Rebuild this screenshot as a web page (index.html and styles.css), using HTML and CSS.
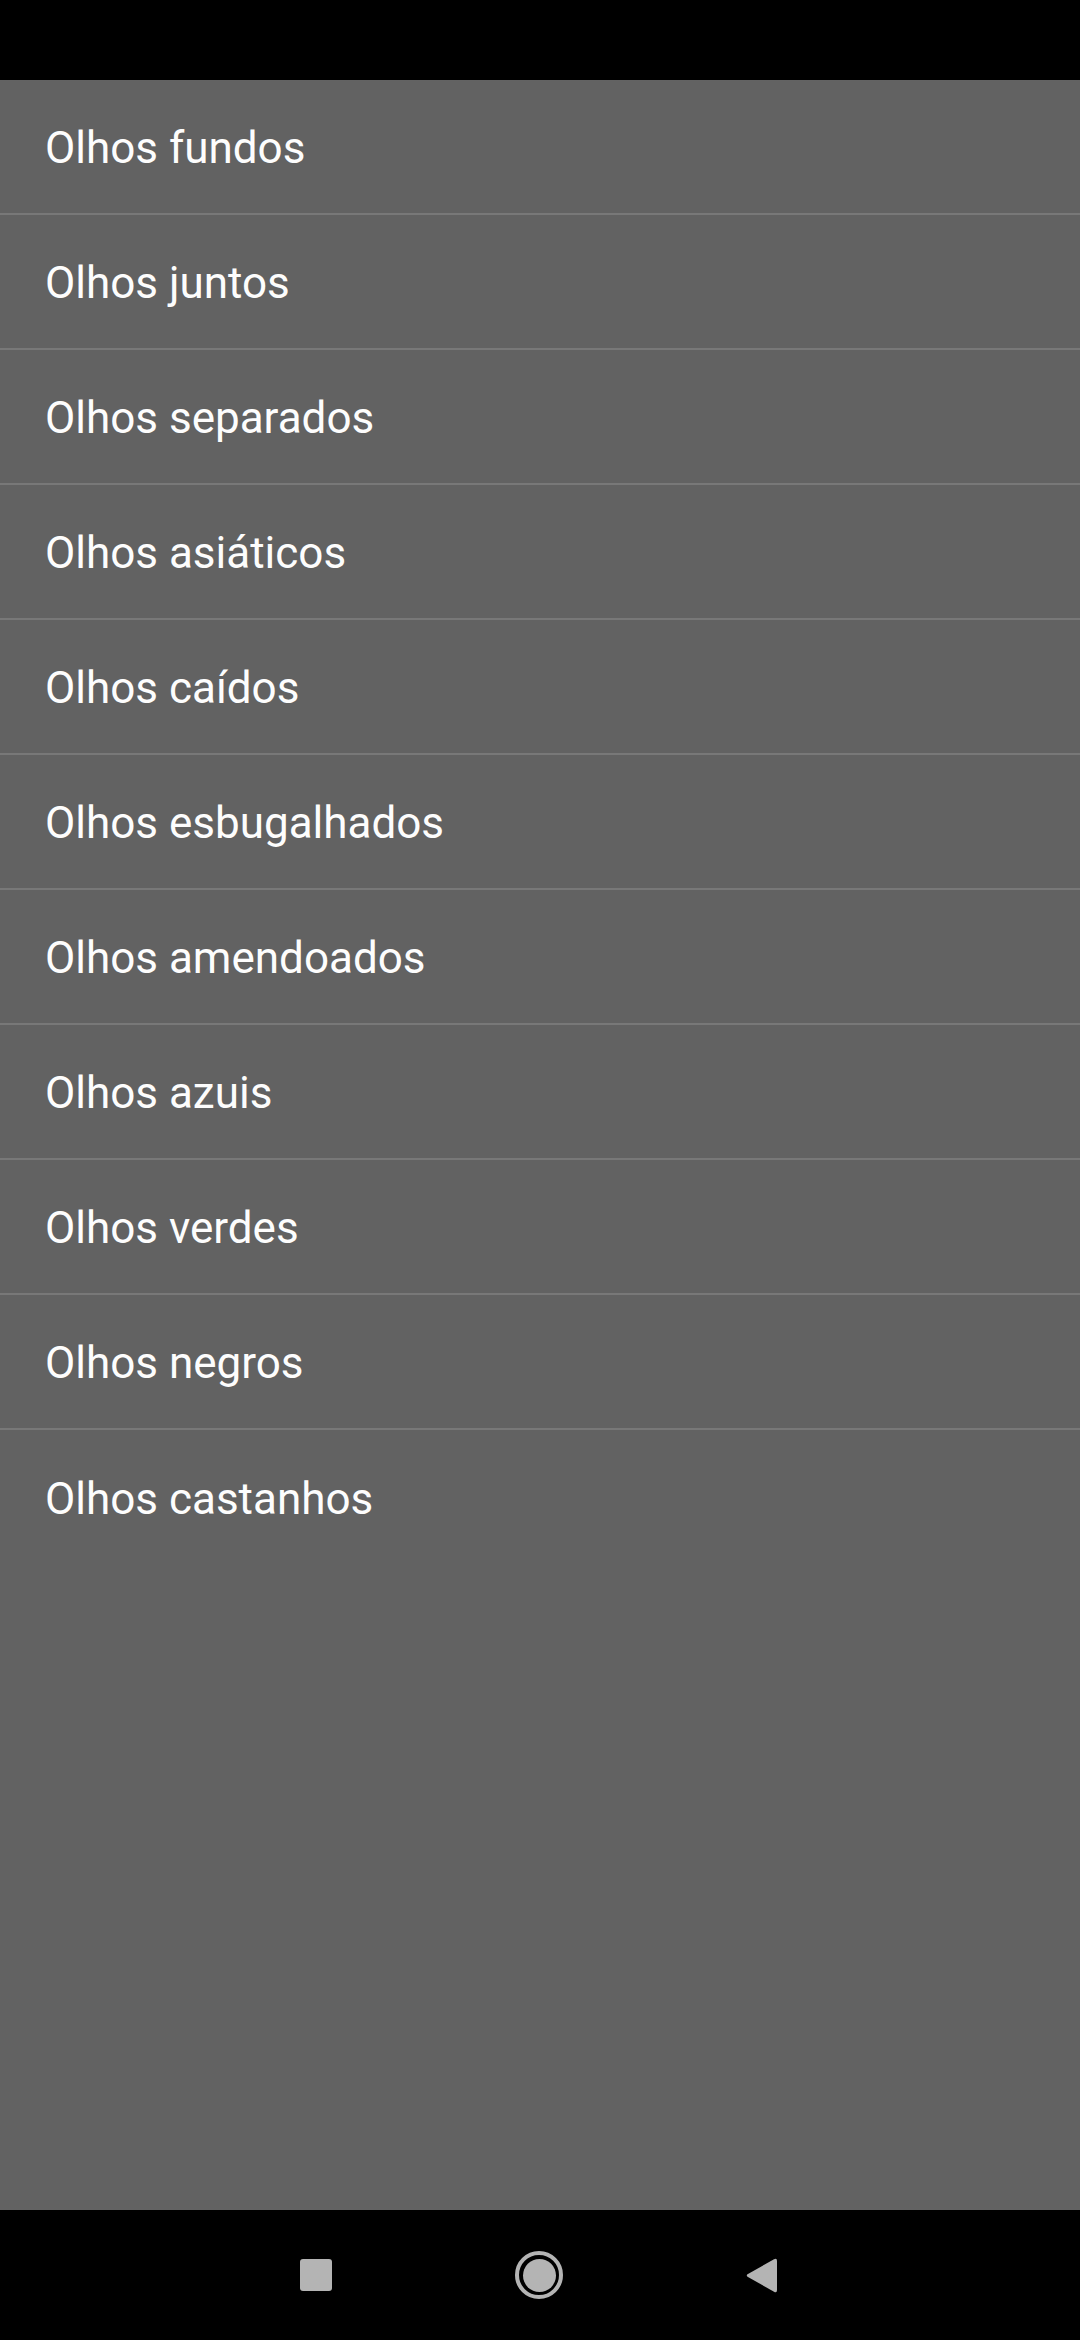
FILE: index.html
```html
<!DOCTYPE html>
<html lang="pt">
<head>
    <meta charset="UTF-8">
    <meta name="viewport" content="width=device-width, initial-scale=1.0">
    <title>Olhos</title>
    <link rel="stylesheet" href="styles.css">
</head>
<body>
    <div class="status-bar"></div>

    <div class="list">
        <div class="item">Olhos fundos</div>
        <div class="item">Olhos juntos</div>
        <div class="item">Olhos separados</div>
        <div class="item">Olhos asiáticos</div>
        <div class="item">Olhos caídos</div>
        <div class="item">Olhos esbugalhados</div>
        <div class="item">Olhos amendoados</div>
        <div class="item">Olhos azuis</div>
        <div class="item">Olhos verdes</div>
        <div class="item">Olhos negros</div>
        <div class="item last">Olhos castanhos</div>
    </div>

    <div class="nav-bar">
        <div class="nav-square"></div>
        <div class="nav-home"><div class="nav-home-dot"></div></div>
        <svg class="nav-back" width="31" height="35" viewBox="0 0 31 35">
            <path d="M28 1.2 Q31 -0.5 31 3 L31 32 Q31 35.5 28 33.8 L1.5 18.7 Q0 17.5 1.5 16.3 Z" fill="#b4b4b4"/>
        </svg>
    </div>
</body>
</html>
```

FILE: styles.css
```css
body {
    margin: 0;
    width: 1080px;
    height: 2340px;
    display: flex;
    flex-direction: column;
    background-color: #000;
    font-family: Roboto, "Noto Sans", Arial, sans-serif;
}
.status-bar {
    height: 80px;
    background-color: #000;
}
.list {
    flex: 1;
    background-color: #626262;
}
.item {
    box-sizing: border-box;
    height: 135px;
    display: flex;
    align-items: center;
    padding-left: 45px;
    padding-top: 2px;
    font-size: 44px;
    color: #fdfdfd;
    border-bottom: 2px solid #787878;
}
.item.last {
    border-bottom: none;
}
.nav-bar {
    height: 130px;
    display: flex;
    align-items: center;
    gap: 183px;
    padding-left: 300px;
    background-color: #000;
}
.nav-square {
    flex: none;
    width: 32px;
    height: 32px;
    border-radius: 3px;
    background-color: #b4b4b4;
}
.nav-home {
    flex: none;
    width: 40px;
    height: 40px;
    border: 4px solid #b4b4b4;
    border-radius: 50%;
    display: flex;
    align-items: center;
    justify-content: center;
}
.nav-home-dot {
    width: 33px;
    height: 33px;
    border-radius: 50%;
    background-color: #b4b4b4;
}
.nav-back {
    flex: none;
}
```
